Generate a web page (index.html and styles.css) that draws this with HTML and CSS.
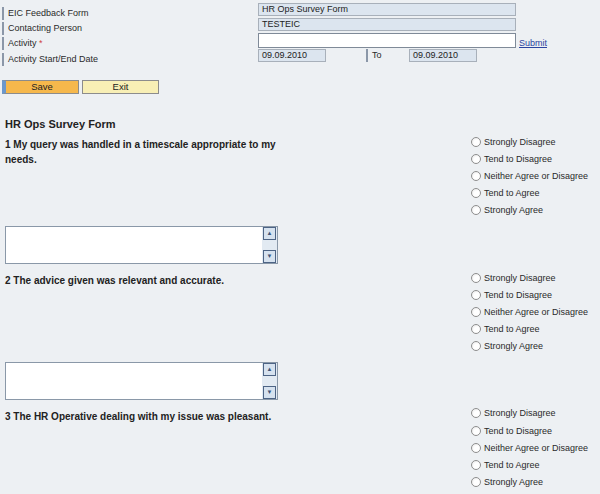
FILE: index.html
```html
<!DOCTYPE html>
<html lang="en">
<head>
    <meta charset="UTF-8">
    <title>EIC Feedback Form</title>
    <link rel="stylesheet" href="styles.css">
</head>
<body>
    <div class="head-form">
        <div class="row">
            <div class="label">EIC Feedback Form</div>
            <div class="field wide">HR Ops Survey Form</div>
        </div>
        <div class="row">
            <div class="label">Contacting Person</div>
            <div class="field wide">TESTEIC</div>
        </div>
        <div class="row tall">
            <div class="label">Activity <span class="req">*</span></div>
            <input type="text" class="field wide input">
            <a href="#" class="submit">Submit</a>
        </div>
        <div class="row">
            <div class="label">Activity Start/End Date</div>
            <div class="field date">09.09.2010</div>
            <div class="label to">To</div>
            <div class="field date">09.09.2010</div>
        </div>
    </div>

    <div class="buttons">
        <button class="btn save">Save</button>
        <button class="btn exit">Exit</button>
    </div>

    <h3>HR Ops Survey Form</h3>

    <div class="question">
        <div class="q-row">
            <div class="q-text">1 My query was handled in a timescale appropriate to my needs.</div>
            <div class="options">
                <label><input type="radio" name="q1"> Strongly Disagree</label>
                <label><input type="radio" name="q1"> Tend to Disagree</label>
                <label><input type="radio" name="q1"> Neither Agree or Disagree</label>
                <label><input type="radio" name="q1"> Tend to Agree</label>
                <label><input type="radio" name="q1"> Strongly Agree</label>
            </div>
        </div>
        <div class="answer">
            <textarea></textarea>
            <div class="scroll"><span class="arrow">&#9650;</span><span class="arrow">&#9660;</span></div>
        </div>
    </div>

    <div class="question">
        <div class="q-row">
            <div class="q-text">2 The advice given was relevant and accurate.</div>
            <div class="options">
                <label><input type="radio" name="q2"> Strongly Disagree</label>
                <label><input type="radio" name="q2"> Tend to Disagree</label>
                <label><input type="radio" name="q2"> Neither Agree or Disagree</label>
                <label><input type="radio" name="q2"> Tend to Agree</label>
                <label><input type="radio" name="q2"> Strongly Agree</label>
            </div>
        </div>
        <div class="answer">
            <textarea></textarea>
            <div class="scroll"><span class="arrow">&#9650;</span><span class="arrow">&#9660;</span></div>
        </div>
    </div>

    <div class="question">
        <div class="q-row">
            <div class="q-text">3 The HR Operative dealing with my issue was pleasant.</div>
            <div class="options">
                <label><input type="radio" name="q3"> Strongly Disagree</label>
                <label><input type="radio" name="q3"> Tend to Disagree</label>
                <label><input type="radio" name="q3"> Neither Agree or Disagree</label>
                <label><input type="radio" name="q3"> Tend to Agree</label>
                <label><input type="radio" name="q3"> Strongly Agree</label>
            </div>
        </div>
    </div>
</body>
</html>
```

FILE: styles.css
```css
body {
    margin: 0;
    padding-top: 3px;
    background-color: #edf0f3;
    font-family: "Liberation Sans", Arial, sans-serif;
    font-size: 9px;
    color: #222;
    overflow: hidden;
}
.head-form {
    display: flex;
    flex-direction: column;
}
.row {
    display: flex;
    align-items: flex-start;
    height: 15px;
}
.row.tall {
    height: 16px;
}
.label {
    width: 250px;
    margin-left: 2px;
    margin-top: 4px;
    padding-left: 4px;
    border-left: 2px solid #8b97a8;
    height: 13px;
    line-height: 13px;
    color: #2a2a2a;
}
.req {
    color: #d04040;
}
.field {
    box-sizing: border-box;
    height: 13px;
    line-height: 11px;
    padding-left: 3px;
    background-color: #dce5ef;
    border: 1px solid #a8b0ba;
    color: #222;
}
.wide {
    width: 258px;
}
.input {
    height: 15px;
    margin: 0;
    background-color: #fff;
    border: 1px solid #7f8a98;
    font: inherit;
}
.submit {
    margin-left: 3px;
    margin-top: 5px;
    color: #2b44a0;
}
.date {
    width: 68px;
}
.label.to {
    width: 37px;
    margin-left: 40px;
    margin-top: 0;
}
.buttons {
    display: flex;
    gap: 3px;
    margin-top: 16px;
    margin-left: 2px;
}
.btn {
    box-sizing: border-box;
    width: 77px;
    height: 14px;
    padding: 0;
    font: inherit;
    font-size: 9.5px;
    line-height: 12px;
    color: #222;
    border: 1px solid #8c8c8c;
    cursor: pointer;
}
.save {
    background-color: #f6b84c;
    border-left: 4px solid #6c98cc;
}
.exit {
    background-color: #f8efb5;
}
h3 {
    margin: 23px 0 0 5px;
    font-size: 11px;
    line-height: 14px;
    color: #222;
}
.question {
    margin-bottom: 5px;
}
.q-row {
    display: flex;
    margin-top: 2px;
}
.q-text {
    width: 272px;
    padding-left: 5px;
    padding-top: 4px;
    font-weight: bold;
    font-size: 10px;
    line-height: 15px;
}
.options {
    margin-left: auto;
    width: 130px;
    display: flex;
    flex-direction: column;
}
.options label {
    display: flex;
    align-items: center;
    height: 17.2px;
    color: #2a2a2a;
}
.options input {
    appearance: none;
    -webkit-appearance: none;
    box-sizing: border-box;
    width: 10px;
    height: 10px;
    margin: 0 3px 0 1px;
    border: 1px solid #8e8e8e;
    border-radius: 50%;
    background: radial-gradient(circle at 60% 60%, #fff 40%, #e2e2e2 100%);
}
.answer {
    display: flex;
    box-sizing: border-box;
    width: 273px;
    height: 38px;
    margin: 7px 0 0 5px;
    border: 1px solid #8a98a8;
    background-color: #fff;
}
.answer textarea {
    flex: 1;
    border: none;
    resize: none;
    outline: none;
    background: #fff;
}
.scroll {
    width: 15px;
    display: flex;
    flex-direction: column;
    justify-content: space-between;
    align-items: center;
    background-color: #e2eaf2;
}
.arrow {
    box-sizing: border-box;
    width: 13px;
    height: 13px;
    margin: 0 1px;
    border: 1px solid #4d6485;
    background-color: #d6e2ef;
    color: #3c5478;
    font-size: 6px;
    line-height: 11px;
    text-align: center;
}
```
